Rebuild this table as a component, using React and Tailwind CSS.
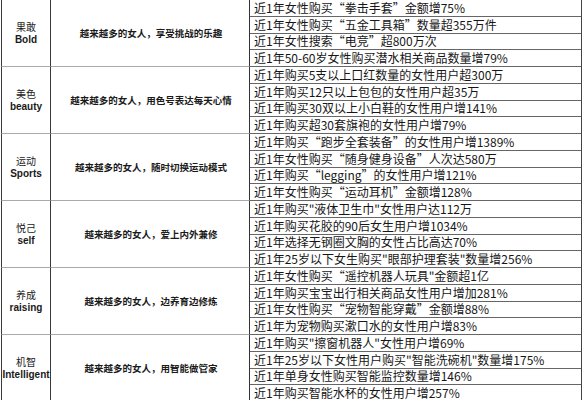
const groups = [
  {
    zh: "果敢",
    en: "Bold",
    desc: "越来越多的女人，享受挑战的乐趣",
    rows: [
      "近1年女性购买“拳击手套”金额增75%",
      "近1年女性购买“五金工具箱”数量超355万件",
      "近1年女性搜索“电竞”超800万次",
      "近1年50-60岁女性购买潜水相关商品数量增79%",
    ],
  },
  {
    zh: "美色",
    en: "beauty",
    desc: "越来越多的女人，用色号表达每天心情",
    rows: [
      "近1年购买5支以上口红数量的女性用户超300万",
      "近1年购买12只以上包包的女性用户超35万",
      "近1年购买30双以上小白鞋的女性用户增141%",
      "近1年购买超30套旗袍的女性用户增79%",
    ],
  },
  {
    zh: "运动",
    en: "Sports",
    desc: "越来越多的女人，随时切换运动模式",
    rows: [
      "近1年购买“跑步全套装备”的女性用户增1389%",
      "近1年女性购买“随身健身设备”人次达580万",
      "近1年购买“legging”的女性用户增121%",
      "近1年女性购买“运动耳机”金额增128%",
    ],
  },
  {
    zh: "悦己",
    en: "self",
    desc: "越来越多的女人，爱上内外兼修",
    rows: [
      "近1年购买\"液体卫生巾\"女性用户达112万",
      "近1年购买花胶的90后女生用户增1034%",
      "近1年选择无钢圈文胸的女性占比高达70%",
      "近1年25岁以下女生购买\"眼部护理套装\"数量增256%",
    ],
  },
  {
    zh: "养成",
    en: "raising",
    desc: "越来越多的女人，边养育边修炼",
    rows: [
      "近1年女性购买“遥控机器人玩具\"金额超1亿",
      "近1年购买宝宝出行相关商品女性用户增加281%",
      "近1年女性购买“宠物智能穿戴”金额增88%",
      "近1年为宠物购买漱口水的女性用户增83%",
    ],
  },
  {
    zh: "机智",
    en: "Intelligent",
    desc: "越来越多的女人，用智能做管家",
    rows: [
      "近1年购买\"擦窗机器人\"女性用户增69%",
      "近1年25岁以下女性用户购买\"智能洗碗机\"数量增175%",
      "近1年单身女性购买智能监控数量增146%",
      "近1年购买智能水杯的女性用户增257%",
    ],
  },
];

export default function App() {
  return (
    <div className="w-[582px] h-[400px] overflow-hidden bg-white">
      <div className="ml-px mt-[-1px] flex flex-col text-[#1a1a1a] border-t border-[#777]">
        {groups.map((g, i) => (
          <div key={i} className="flex h-[67px]">
            <div className="w-[50px] shrink-0 border-l border-r border-[#3a3a3a] border-b border-b-[#aaaaaa] flex flex-col items-center justify-center">
              <div className="text-[10px] leading-[13px] font-['Noto_Sans_CJK_SC',sans-serif]">{g.zh}</div>
              <div className="text-[10px] leading-[13px] font-bold whitespace-nowrap font-['Liberation_Sans','Noto_Sans_CJK_SC',sans-serif]">{g.en}</div>
            </div>
            <div className="w-[199px] shrink-0 border-r border-[#333] border-b border-b-[#aaaaaa] flex items-center justify-center pl-[2px]">
              <div className="text-[9.5px] leading-[12px] font-bold whitespace-nowrap font-['Noto_Sans_CJK_SC',sans-serif]">{g.desc}</div>
            </div>
            <div className="w-[332px] shrink-0 grid grid-rows-4 border-r border-[#444]">
              {g.rows.map((r, j) => (
                <div key={j} className="border-b border-[#666] pl-[4px] flex items-center overflow-hidden">
                  <span className="text-[12px] leading-[15px] whitespace-nowrap font-['Noto_Sans_CJK_SC',sans-serif] text-[#161616] -mt-px">{r}</span>
                </div>
              ))}
            </div>
          </div>
        ))}
      </div>
    </div>
  );
}
